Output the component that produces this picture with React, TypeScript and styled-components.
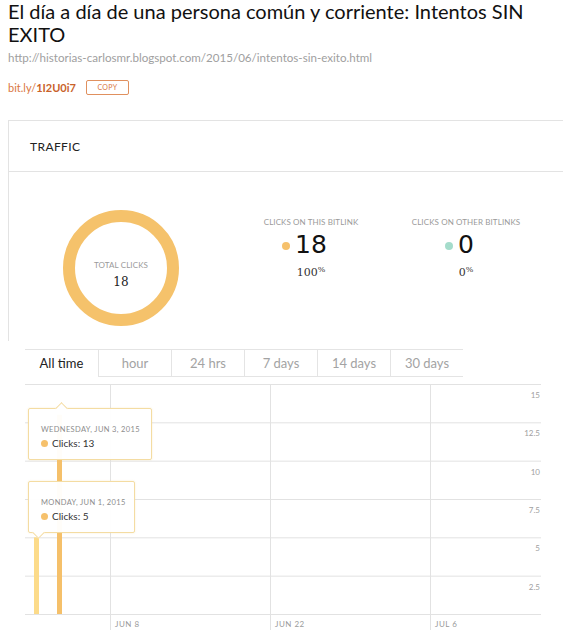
import * as React from 'react';
import styled, { createGlobalStyle } from 'styled-components';

const GlobalStyle = createGlobalStyle`
  body {
    margin: 0;
    background: #fff;
    font-family: Lato, "Open Sans", sans-serif;
    overflow: hidden;
  }
`;

const Page = styled.div`
  width: 568px;
  padding: 0 0 0 8px;
  box-sizing: border-box;
`;

const Title = styled.h1`
  margin: 0;
  max-width: 530px;
  font-size: 20px;
  line-height: 23px;
  font-weight: 400;
  color: #111;
`;

const LongUrl = styled.div`
  margin-top: 4px;
  font-size: 11.6px;
  line-height: 16px;
  color: #a0a0a0;
`;

const LinkRow = styled.div`
  display: flex;
  align-items: center;
  gap: 10px;
  margin-top: 13px;
  height: 16px;
`;

const ShortLink = styled.a`
  font-size: 11px;
  color: #d9773f;
  text-decoration: none;

  b {
    font-weight: 700;
    color: #c9622a;
  }
`;

const CopyButton = styled.button`
  width: 43px;
  height: 15px;
  padding: 0;
  border: 1px solid #e0905e;
  border-radius: 2px;
  background: #fff;
  color: #d9773f;
  font-family: Lato, sans-serif;
  font-size: 7px;
  letter-spacing: 0.3px;
`;

const Card = styled.section`
  margin-top: 25px;
  width: 554px;
  border-top: 1px solid #e3e3e3;
  border-left: 1px solid #e3e3e3;
`;

const CardHeader = styled.div`
  height: 50px;
  display: flex;
  align-items: center;
  padding-left: 21px;
  border-bottom: 1px solid #e3e3e3;
  font-size: 12px;
  letter-spacing: 0.4px;
  color: #222;
`;

const CardBody = styled.div`
  height: 169px;
  display: flex;
  align-items: flex-start;
  padding: 38px 0 0 54px;
  box-sizing: border-box;
`;

const Donut = styled.div`
  width: 116px;
  height: 116px;
  border-radius: 50%;
  border: 12px solid #f5c26b;
  box-sizing: border-box;
  display: flex;
  flex-direction: column;
  align-items: center;
  justify-content: center;
  padding-top: 12px;
  margin-right: 67px;
`;

const SmallCaps = styled.div`
  font-size: 8px;
  line-height: 10px;
  color: #9a9a9a;
  letter-spacing: 0.1px;
  white-space: nowrap;
`;

const DonutValue = styled.div`
  margin-top: 5px;
  font-family: "DejaVu Serif", serif;
  font-size: 12px;
  line-height: 14px;
  color: #222;
`;

const Stat = styled.div<{ $gap?: number }>`
  width: 130px;
  margin-left: ${p => p.$gap ?? 0}px;
  display: flex;
  flex-direction: column;
  align-items: center;
  margin-top: 7px;
`;

const BigValue = styled.div`
  position: relative;
  margin-top: 5px;
  font-family: "DejaVu Sans", sans-serif;
  font-size: 25px;
  line-height: 26px;
  color: #111;
`;

const Dot = styled.span<{ $color: string; $size?: number }>`
  display: inline-block;
  width: ${p => p.$size ?? 8}px;
  height: ${p => p.$size ?? 8}px;
  border-radius: 50%;
  background: ${p => p.$color};
  flex: none;
`;

const ValueDot = styled(Dot)`
  position: absolute;
  left: -13px;
  top: 10px;
`;

const Percent = styled.div`
  margin-top: 5px;
  font-family: "DejaVu Serif", serif;
  font-size: 11px;
  line-height: 14px;
  color: #333;

  sup {
    font-size: 8px;
    vertical-align: 4px;
  }
`;

const ChartSection = styled.div`
  margin-top: 8px;
  padding-left: 17px;
`;

const Tabs = styled.div`
  display: flex;
  width: 438px;
  border-top: 1px solid #e4e4e4;
`;

const Tab = styled.div<{ $active?: boolean }>`
  width: 73px;
  height: 26px;
  display: flex;
  align-items: center;
  justify-content: center;
  font-size: 13px;
  color: ${p => (p.$active ? '#222' : '#a3a3a3')};
  border-bottom: 1px solid ${p => (p.$active ? 'transparent' : '#e4e4e4')};
  border-left: 1px solid ${p => (p.$active ? 'transparent' : '#e4e4e4')};

  &:first-child {
    width: 74px;
    border-left: none;
  }
`;

const Chart = styled.div`
  position: relative;
  margin-top: 7px;
  width: 525px;
  height: 256px;
`;

const Tooltip = styled.div<{ $top: number; $width: number }>`
  position: absolute;
  left: 3px;
  top: ${p => p.$top}px;
  width: ${p => p.$width}px;
  height: 52px;
  box-sizing: border-box;
  padding: 15px 0 0 12px;
  background: rgba(255, 255, 255, 0.96);
  border: 1px solid #f4dca2;
  border-radius: 2px;
  box-shadow: 0 0 2px rgba(240, 210, 140, 0.4);
`;

const Arrow = styled.span<{ $left: number; $down?: boolean }>`
  position: absolute;
  left: ${p => p.$left}px;
  ${p => (p.$down ? 'bottom: -5px;' : 'top: -5px;')}
  width: 8px;
  height: 8px;
  background: #fff;
  border-left: 1px solid #f4dca2;
  border-top: 1px solid #f4dca2;
  transform: rotate(${p => (p.$down ? '225deg' : '45deg')});
`;

const TipDate = styled.div`
  font-size: 7.5px;
  line-height: 11px;
  letter-spacing: 0.35px;
  color: #8c8c8c;
  white-space: nowrap;
`;

const TipClicks = styled.div`
  display: flex;
  align-items: center;
  gap: 4px;
  margin-top: 2px;
  font-size: 10px;
  line-height: 13px;
  color: #333;
`;

const grid = '#e2e2e2';
const rowY = [0, 1, 2, 3, 4, 5, 6].map(i => i * (230 / 6));
const yLabels = ['15', '12.5', '10', '7.5', '5', '2.5'];
const xTicks = [
  { x: 85, label: 'JUN 8' },
  { x: 245, label: 'JUN 22' },
  { x: 405, label: 'JUL 6' },
];

const ChartDrawing = () => (
  <svg width="525" height="256" style={{ display: 'block' }}>
    {rowY.map(y => (
      <line key={y} x1="0" x2="516" y1={y + 0.5} y2={y + 0.5} stroke={grid} strokeWidth="1" />
    ))}
    {xTicks.map(t => (
      <g key={t.label}>
        <line x1={t.x + 0.5} x2={t.x + 0.5} y1="0" y2="246" stroke={grid} strokeWidth="1" />
        <text x={t.x + 5} y="243" fontSize="8" fill="#9a9a9a" fontFamily="Lato, sans-serif" letterSpacing="0.5">
          {t.label}
        </text>
      </g>
    ))}
    {yLabels.map((l, i) => (
      <text key={l} x="515" y={rowY[i] + 14} fontSize="8" fill="#a0a0a0" textAnchor="end" fontFamily="Lato, sans-serif">
        {l}
      </text>
    ))}
    <rect x="9" y={230 - (5 / 15) * 230} width="5" height={(5 / 15) * 230} fill="#fcdb8a" />
    <rect x="32" y={230 - (13 / 15) * 230} width="5" height={(13 / 15) * 230} fill="#f5c06a" />
  </svg>
);

const App = () => (
  <Page>
    <GlobalStyle />
    <Title>El día a día de una persona común y corriente: Intentos SIN EXITO</Title>
    <LongUrl>http://historias-carlosmr.blogspot.com/2015/06/intentos-sin-exito.html</LongUrl>
    <LinkRow>
      <ShortLink href="#">
        bit.ly/<b>1I2U0i7</b>
      </ShortLink>
      <CopyButton>COPY</CopyButton>
    </LinkRow>

    <Card>
      <CardHeader>TRAFFIC</CardHeader>
      <CardBody>
        <Donut>
          <SmallCaps>TOTAL CLICKS</SmallCaps>
          <DonutValue>18</DonutValue>
        </Donut>
        <Stat>
          <SmallCaps>CLICKS ON THIS BITLINK</SmallCaps>
          <BigValue>
            <ValueDot $color="#f6c16c" />
            18
          </BigValue>
          <Percent>
            100<sup>%</sup>
          </Percent>
        </Stat>
        <Stat $gap={25}>
          <SmallCaps>CLICKS ON OTHER BITLINKS</SmallCaps>
          <BigValue>
            <ValueDot $color="#a5dccb" />
            0
          </BigValue>
          <Percent>
            0<sup>%</sup>
          </Percent>
        </Stat>
      </CardBody>
    </Card>

    <ChartSection>
      <Tabs>
        <Tab $active>All time</Tab>
        <Tab>hour</Tab>
        <Tab>24 hrs</Tab>
        <Tab>7 days</Tab>
        <Tab>14 days</Tab>
        <Tab>30 days</Tab>
      </Tabs>
      <Chart>
        <ChartDrawing />
        <Tooltip $top={24} $width={124}>
          <Arrow $left={28} />
          <TipDate>WEDNESDAY, JUN 3, 2015</TipDate>
          <TipClicks>
            <Dot $color="#f6c16c" $size={7} />
            Clicks: 13
          </TipClicks>
        </Tooltip>
        <Tooltip $top={97} $width={107}>
          <Arrow $left={5} $down />
          <TipDate>MONDAY, JUN 1, 2015</TipDate>
          <TipClicks>
            <Dot $color="#f6c16c" $size={7} />
            Clicks: 5
          </TipClicks>
        </Tooltip>
      </Chart>
    </ChartSection>
  </Page>
);

export default App;
